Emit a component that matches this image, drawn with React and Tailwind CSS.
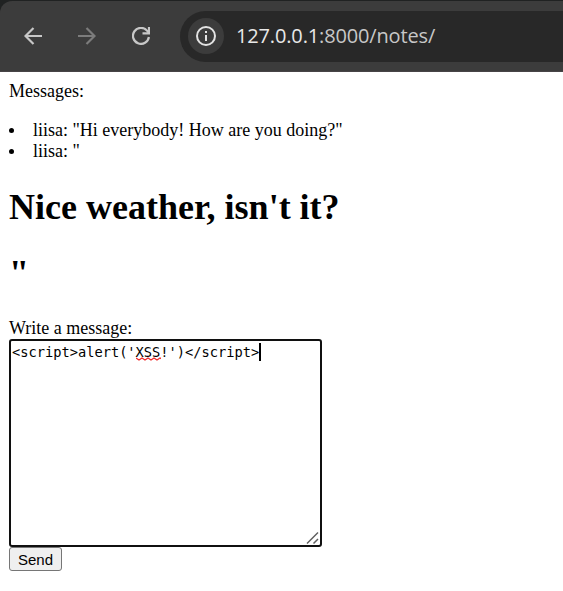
function Toolbar() {
  return (
    <header className="h-[72px] bg-[#202222] pt-px">
      <div className="flex h-[71px] items-center rounded-tl-[12px] border-b border-[#474446] bg-[#3c3c3c]">
        <svg className="ml-[24px] shrink-0" width="18" height="18" viewBox="0 0 18 18" fill="none" stroke="#c7c7c7" strokeWidth="2.200">
          <path d="M18 9H1.500M9.500 1L1.500 9l8 8" />
        </svg>
        <svg className="ml-[36px] shrink-0" width="18" height="18" viewBox="0 0 18 18" fill="none" stroke="#7c7c7c" strokeWidth="2.200">
          <path d="M0 9h16.500M8.500 1l8 8-8 8" />
        </svg>
        <svg className="ml-[36px] shrink-0" width="18" height="18" viewBox="0 0 18 18" fill="none" stroke="#c7c7c7" strokeWidth="2.200">
          <path d="M16.900 10A8 8 0 1 1 15 3.600L17 6" />
          <path d="M17 0v6.300H10.500" />
        </svg>
        <div className="ml-[30px] flex h-[51px] flex-1 items-center rounded-l-full bg-[#282828] pl-[8px]">
          <div className="flex size-9 items-center justify-center rounded-full bg-[#3c3c3c]">
            <svg width="20" height="20" viewBox="0 0 20 20" fill="none" stroke="#e3e3e3" strokeWidth="2">
              <circle cx="10" cy="10" r="9" />
              <path d="M10 9v6M10 5v2" />
            </svg>
          </div>
          <span className="ml-[12px] whitespace-nowrap font-['Open_Sans',sans-serif] text-[20px] leading-none tracking-[-0.150px] text-[#c7c7c7]">
            <span className="text-[#e8e8e8]">127.0.0.1</span>:8000/notes/
          </span>
        </div>
      </div>
    </header>
  );
}

function Message({ children }) {
  return (
    <li className="flex h-[21px] items-center">
      <span className="mr-[19px] size-[5px] rounded-full bg-black" />
      <span>{children}</span>
    </li>
  );
}

export default function App() {
  return (
    <div className="h-[591px] w-[563px] overflow-hidden bg-white font-['Liberation_Serif',serif] text-[18px] leading-[21px] text-black">
      <Toolbar />
      <main className="px-[9px] pt-[9px]">
        <p>Messages:</p>
        <ul className="mt-[18px]">
          <Message>liisa: "Hi everybody! How are you doing?"</Message>
          <Message>liisa: "</Message>
        </ul>
        <h1 className="mt-[24px] text-[36px] font-bold leading-[42px]">Nice weather, isn't it?</h1>
        <h1 className="mt-[24px] text-[36px] font-bold leading-[42px]">"</h1>
        <p className="mt-[24px]">Write a message:</p>
        <div className="relative h-[208px] w-[313px] rounded-[3px] border-2 border-[#101010] pl-px pt-[2px] font-['DejaVu_Sans_Mono',monospace] text-[13.700px] leading-[18px]">
          <div className="flex items-center whitespace-pre">
            <span>{"<script>alert('"}</span>
            <span className="relative">
              XSS
              <svg className="absolute left-0 top-[14px]" width="25" height="4" viewBox="0 0 25 4" fill="none" stroke="#ef2b2b" strokeWidth="1.300">
                <path d="M0 1l3 2 3-2 3 2 3-2 3 2 3-2 3 2 3-2 1 .6" />
              </svg>
            </span>
            <span>{"!')</script>"}</span>
            <span className="h-[18px] w-[2px] bg-black" />
          </div>
          <svg className="absolute bottom-0 right-0" width="14" height="14" viewBox="0 0 14 14" stroke="#606060" strokeWidth="1.500">
            <path d="M1 12.500L12 1.500M7.500 12.500L12 8" />
          </svg>
        </div>
        <button className="block h-[24px] w-[53px] rounded-[3px] border border-[#767676] bg-[#efefef] pt-px font-['Liberation_Sans',sans-serif] text-[15px] leading-[21px]">
          Send
        </button>
      </main>
    </div>
  );
}
